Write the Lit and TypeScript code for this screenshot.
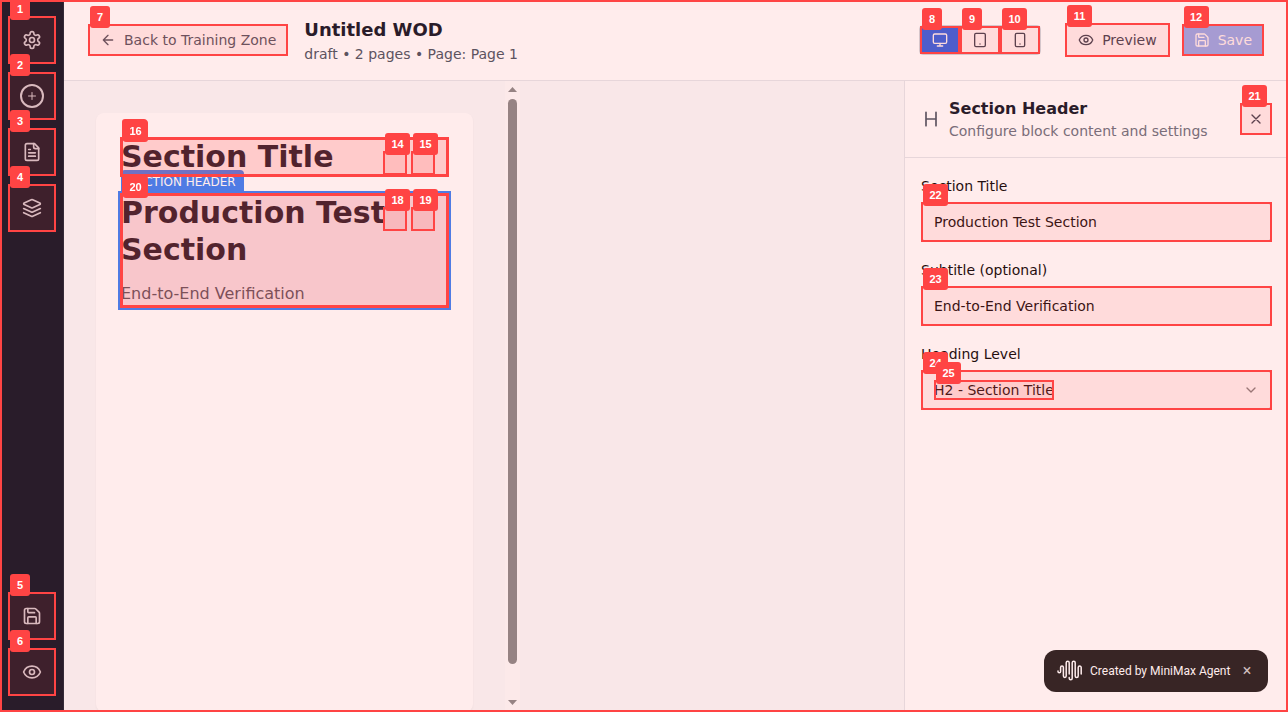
import { LitElement, html, css, svg, nothing } from "lit";
import { customElement, property, state } from "lit/decorators.js";
import { classMap } from "lit/directives/class-map.js";

const glyphs = {
  settings: svg`<path d="M12.22 2h-.44a2 2 0 0 0-2 2v.18a2 2 0 0 1-1 1.73l-.43.25a2 2 0 0 1-2 0l-.15-.08a2 2 0 0 0-2.73.73l-.22.38a2 2 0 0 0 .73 2.73l.15.1a2 2 0 0 1 1 1.72v.51a2 2 0 0 1-1 1.74l-.15.09a2 2 0 0 0-.73 2.73l.22.38a2 2 0 0 0 2.73.73l.15-.08a2 2 0 0 1 2 0l.43.25a2 2 0 0 1 1 1.73V20a2 2 0 0 0 2 2h.44a2 2 0 0 0 2-2v-.18a2 2 0 0 1 1-1.73l.43-.25a2 2 0 0 1 2 0l.15.08a2 2 0 0 0 2.73-.73l.22-.39a2 2 0 0 0-.73-2.73l-.15-.08a2 2 0 0 1-1-1.74v-.5a2 2 0 0 1 1-1.74l.15-.09a2 2 0 0 0 .73-2.73l-.22-.38a2 2 0 0 0-2.73-.73l-.15.08a2 2 0 0 1-2 0l-.43-.25a2 2 0 0 1-1-1.73V4a2 2 0 0 0-2-2z"/><circle cx="12" cy="12" r="3"/>`,
  plus: svg`<path d="M5 12h14M12 5v14"/>`,
  file: svg`<path d="M15 2H6a2 2 0 0 0-2 2v16a2 2 0 0 0 2 2h12a2 2 0 0 0 2-2V7Z"/><path d="M14 2v4a2 2 0 0 0 2 2h4M10 9H8M16 13H8M16 17H8"/>`,
  layers: svg`<path d="m12.83 2.18a2 2 0 0 0-1.66 0L2.6 6.08a1 1 0 0 0 0 1.83l8.58 3.91a2 2 0 0 0 1.66 0l8.58-3.9a1 1 0 0 0 0-1.83Z"/><path d="m22 17.65-9.17 4.16a2 2 0 0 1-1.66 0L2 17.65"/><path d="m22 12.65-9.17 4.16a2 2 0 0 1-1.66 0L2 12.65"/>`,
  save: svg`<path d="M15.2 3a2 2 0 0 1 1.4.6l3.8 3.8a2 2 0 0 1 .6 1.4V19a2 2 0 0 1-2 2H5a2 2 0 0 1-2-2V5a2 2 0 0 1 2-2z"/><path d="M17 21v-7a1 1 0 0 0-1-1H8a1 1 0 0 0-1 1v7M7 3v4a1 1 0 0 0 1 1h7"/>`,
  eye: svg`<path d="M2.06 12.35a1 1 0 0 1 0-.7 10.75 10.75 0 0 1 19.88 0 1 1 0 0 1 0 .7 10.75 10.75 0 0 1-19.88 0"/><circle cx="12" cy="12" r="3"/>`,
  back: svg`<path d="m12 19-7-7 7-7M19 12H5"/>`,
  monitor: svg`<rect x="2" y="3" width="20" height="14" rx="2"/><path d="M8 21h8M12 17v4"/>`,
  tablet: svg`<rect x="4" y="2" width="16" height="20" rx="2"/><path d="M12 18h.01"/>`,
  phone: svg`<rect x="5" y="2" width="14" height="20" rx="2"/><path d="M12 18h.01"/>`,
  close: svg`<path d="M18 6 6 18M6 6l12 12"/>`,
  heading: svg`<path d="M6 12h12M6 20V4M18 20V4"/>`,
  chevron: svg`<path d="m6 9 6 6 6-6"/>`,
};
type Glyph = keyof typeof glyphs;

const icon = (name: Glyph, size = 16) => html`<svg
  class="icon" width=${size} height=${size} viewBox="0 0 24 24" fill="none"
  stroke="currentColor" stroke-width="2" stroke-linecap="round" stroke-linejoin="round"
  aria-hidden="true">${glyphs[name]}</svg>`;

const mark = (n?: number, extra = "") => html`<span class="mark ${extra}" aria-hidden="true">${
  n ? html`<span class="tag ${n > 9 ? "wide" : ""}">${n}</span>` : nothing
}</span>`;

const shared = css`
  * { box-sizing: border-box; }
  button, input, select { font: inherit; color: inherit; margin: 0; }
  button { border: 0; background: none; padding: 0; cursor: pointer; }
  h1, h2, h3, p { margin: 0; }
  .icon { display: block; flex: none; }
  .slot { position: relative; display: flex; }
  .mark {
    position: absolute; inset: 0; z-index: 10; pointer-events: none;
    border: 2px solid #ff4444; background: rgba(255, 68, 68, 0.1);
  }
  .mark.inner { inset: 1px; }
  .tag {
    position: absolute; left: 0; top: -20px; width: 20px; height: 22px;
    border-radius: 3px; background: #ff4444; color: #fff; text-align: center;
    font: bold 11px/22px "Liberation Sans", Arial, sans-serif;
  }
  .tag.wide { width: 25px; }
  .inner > .tag { box-shadow: -1px -1px 0 #ff4444; }
`;

@customElement("side-rail")
class SideRail extends LitElement {
  static styles = [shared, css`
    :host {
      display: flex; flex-direction: column; gap: 8px; flex: none; width: 64px;
      padding: 16px 8px; background: #111827; border-right: 1px solid #1f2937; color: #d1d5db;
    }
    .slot { width: 48px; height: 48px; }
    .slot.push { margin-top: auto; }
    button { width: 100%; display: grid; place-items: center; }
    .ring {
      display: grid; place-items: center; width: 24px; height: 24px;
      border: 2px solid currentColor; border-radius: 50%;
    }
  `];
  items: { label: string; glyph: Glyph; push?: boolean }[] = [
    { label: "Settings", glyph: "settings" },
    { label: "Add block", glyph: "plus" },
    { label: "Pages", glyph: "file" },
    { label: "Layers", glyph: "layers" },
    { label: "Save", glyph: "save", push: true },
    { label: "Preview", glyph: "eye" },
  ];
  render() {
    return this.items.map((it, i) => html`
      <div class="slot ${it.push ? "push" : ""}">
        <button aria-label=${it.label}>${it.glyph === "plus"
          ? html`<span class="ring">${icon("plus", 12)}</span>`
          : icon(it.glyph, 20)}</button>
        ${mark(i + 1)}
      </div>`);
  }
}

@customElement("top-bar")
class TopBar extends LitElement {
  @state() device = "Desktop";
  static styles = [shared, css`
    :host {
      display: flex; align-items: center; gap: 16px; padding: 16px 24px;
      background: #fff; border-bottom: 1px solid #e5e7eb;
    }
    .btn { display: flex; align-items: center; gap: 8px; height: 32px; padding: 0 12px; color: #4b5563; }
    h1 { font-size: 18px; line-height: 28px; color: #111827; }
    p { line-height: 20px; color: #4b5563; }
    .actions { display: flex; align-items: center; gap: 12px; margin-left: auto; }
    .devices { display: flex; margin-right: 12px; border: 1px solid #d1d5db; border-radius: 4px; }
    .device { display: grid; place-items: center; width: 40px; height: 28px; color: #374151; }
    .device.on { background: #2563eb; color: #fff; border-radius: 3px 0 0 3px; }
    .outline { height: 34px; border: 1px solid #d1d5db; border-radius: 4px; color: #374151; }
    .primary { background: #2563eb; color: #fff; border-radius: 4px; opacity: 0.5; }
  `];
  render() {
    const devices: [string, Glyph][] = [["Desktop", "monitor"], ["Tablet", "tablet"], ["Mobile", "phone"]];
    return html`
      <div class="slot"><button class="btn">${icon("back")}Back to Training Zone</button>${mark(7)}</div>
      <div>
        <h1>Untitled WOD</h1>
        <p>draft • 2 pages • Page: Page 1</p>
      </div>
      <div class="actions">
        <div class="devices">
          ${devices.map(([name, g], i) => html`<div class="slot">
            <button class=${classMap({ device: true, on: this.device === name })} aria-label=${name}
              @click=${() => (this.device = name)}>${icon(g)}</button>${mark(8 + i)}
          </div>`)}
        </div>
        <div class="slot"><button class="btn outline">${icon("eye")}Preview</button>${mark(11)}</div>
        <div class="slot"><button class="btn primary" disabled>${icon("save")}Save</button>${mark(12)}</div>
      </div>`;
  }
}

@customElement("page-canvas")
class PageCanvas extends LitElement {
  static styles = [shared, css`
    :host { display: flex; flex: 1; min-width: 0; min-height: 0; background: #f9fafb; }
    .view { display: flex; width: 456px; max-width: 100%; }
    .sheet-wrap { flex: 1; min-width: 0; padding: 32px 32px 0; display: flex; }
    .sheet {
      flex: 1; min-width: 0; padding: 24px; display: flex; flex-direction: column; gap: 16px;
      background: #fff; border-radius: 8px; box-shadow: 0 1px 2px rgba(0, 0, 0, 0.05);
    }
    .block { position: relative; padding: 1px; color: #111827; }
    .block h2 { font-size: 30px; line-height: 37px; min-height: 38px; }
    .block p { margin-top: 12px; font-size: 16px; line-height: 27px; color: #4b5563; }
    .block.selected { background: #f6f9ff; box-shadow: 0 0 0 2px #3b82f6; }
    .chip {
      position: absolute; left: 1px; bottom: 100%; padding: 4px 8px 2px; border-radius: 4px 4px 0 0;
      background: #3b82f6; color: #fff; font-size: 12px; line-height: 17px; white-space: nowrap;
    }
    .tools { position: absolute; top: 14px; right: 14px; z-index: 11; display: flex; gap: 4px; }
    .tools .slot { width: 24px; height: 24px; }
    .tools button { width: 100%; opacity: 0; }
    .scroll {
      flex: none; width: 15px; padding: 6px 3px 7px; display: flex; flex-direction: column;
      align-items: center; gap: 7px; background: #fcfcfc; color: #8b8b8b;
    }
    .scroll svg { display: block; flex: none; }
    .thumb { width: 9px; flex: 1; border-radius: 5px; background: currentColor; margin-bottom: 29px; }
  `];
  tools(n: number) {
    return html`<div class="tools">
      <div class="slot"><button aria-label="Duplicate block"></button>${mark(n)}</div>
      <div class="slot"><button aria-label="Delete block"></button>${mark(n + 1)}</div>
    </div>`;
  }
  render() {
    return html`
      <div class="view">
        <div class="sheet-wrap">
          <div class="sheet">
            <section class="block">
              <h2>Section Title</h2>
              ${mark()}${mark(16, "inner")}${this.tools(14)}
            </section>
            <section class="block selected">
              <span class="chip">SECTION HEADER</span>
              <h2>Production Test Section</h2>
              <p>End-to-End Verification</p>
              ${mark()}${mark(20, "inner")}${this.tools(18)}
            </section>
          </div>
        </div>
        <div class="scroll" aria-hidden="true">
          <svg width="9" height="5" viewBox="0 0 9 5" fill="currentColor"><path d="M4.5 0 9 5H0z"/></svg>
          <div class="thumb"></div>
          <svg width="9" height="5" viewBox="0 0 9 5" fill="currentColor"><path d="M0 0h9L4.5 5z"/></svg>
        </div>
      </div>`;
  }
}

@customElement("block-settings")
class BlockSettings extends LitElement {
  @property() heading = "Production Test Section";
  @property() subtitle = "End-to-End Verification";
  static styles = [shared, css`
    :host { display: block; flex: none; width: 384px; background: #fff; border-left: 1px solid #e5e7eb; color: #0a0a0a; }
    header { display: flex; align-items: center; gap: 8px; padding: 16px; border-bottom: 1px solid #e5e7eb; color: #4b5563; }
    h3 { font-size: 16px; line-height: 24px; color: #111827; }
    header p { line-height: 20px; color: #6b7280; }
    .slot.close { margin-left: auto; width: 32px; height: 32px; }
    .close button { width: 100%; display: grid; place-items: center; color: #374151; }
    form { display: flex; flex-direction: column; gap: 16px; padding: 16px; }
    label { display: block; line-height: 24px; margin-bottom: 4px; }
    input, select {
      width: 100%; height: 40px; padding: 0 12px; border: 1px solid #d1d5db; border-radius: 6px;
      background: #fff; appearance: none; outline: 0;
    }
    .arrow { position: absolute; right: 13px; top: 12px; opacity: 0.5; pointer-events: none; }
    .value { position: absolute; left: 13px; top: 10px; width: 120px; height: 20px; z-index: 10; pointer-events: none; }
  `];
  render() {
    return html`
      <header>
        ${icon("heading", 20)}
        <div>
          <h3>Section Header</h3>
          <p>Configure block content and settings</p>
        </div>
        <div class="slot close"><button aria-label="Close">${icon("close")}</button>${mark(21)}</div>
      </header>
      <form>
        <div>
          <label for="title">Section Title</label>
          <div class="slot"><input id="title" type="text" .value=${this.heading} />${mark(22)}</div>
        </div>
        <div>
          <label for="subtitle">Subtitle (optional)</label>
          <div class="slot"><input id="subtitle" type="text" .value=${this.subtitle} />${mark(23)}</div>
        </div>
        <div>
          <label for="level">Heading Level</label>
          <div class="slot">
            <select id="level">
              <option>H1 - Page Title</option>
              <option selected>H2 - Section Title</option>
              <option>H3 - Subsection</option>
            </select>
            <span class="arrow">${icon("chevron")}</span>
            ${mark(24)}
            <span class="value">${mark(25)}</span>
          </div>
        </div>
      </form>`;
  }
}

@customElement("agent-toast")
class AgentToast extends LitElement {
  static styles = [shared, css`
    :host {
      position: fixed; right: 20px; bottom: 20px; z-index: 3; display: flex; align-items: center;
      height: 42px; width: 224px; padding: 0 13px; border-radius: 12px; background: #222; color: #fff;
      font: 400 12px/20px Roboto, sans-serif; white-space: nowrap;
    }
    .logo { flex: none; margin-right: 7px; }
    button { margin-left: auto; width: 16px; height: 20px; font: 400 16px/20px Roboto, sans-serif; color: #ccc; }
  `];
  render() {
    return html`
      <svg class="logo" width="26" height="22" viewBox="0 0 26 22" fill="none" stroke="currentColor"
        stroke-width="1.5" stroke-linecap="round" aria-hidden="true">
        <path d="M1 11v.5a1.3 1.3 0 0 0 2.6 0V7.5a1.4 1.4 0 0 1 2.8 0V16a1.4 1.4 0 0 0 2.8 0V2.8a1.5 1.5 0 0 1 3 0V14"/>
        <path d="M12.2 17.5v.8a1.5 1.5 0 0 0 3 0V2.8a1.5 1.5 0 0 1 3 0V16a1.5 1.5 0 0 0 3 0V7.5a1.5 1.5 0 0 1 3 0V14"/>
      </svg>
      <span>Created by MiniMax Agent</span>
      <button aria-label="Dismiss">×</button>`;
  }
}

@customElement("app-root")
class AppRoot extends LitElement {
  static styles = [shared, css`
    :host {
      position: relative; display: flex; height: 100vh; overflow: hidden;
      font: 14px/20px "DejaVu Sans", Verdana, sans-serif;
    }
    .main { flex: 1; min-width: 0; display: flex; flex-direction: column; }
    .work { flex: 1; min-height: 0; display: flex; }
    .frame {
      position: absolute; inset: 0; z-index: 5; pointer-events: none;
      border: 2px solid #ff4444; background: rgba(255, 68, 68, 0.1);
    }
  `];
  render() {
    return html`
      <side-rail></side-rail>
      <div class="main">
        <top-bar></top-bar>
        <div class="work">
          <page-canvas></page-canvas>
          <block-settings></block-settings>
        </div>
      </div>
      <agent-toast></agent-toast>
      <div class="frame"></div>`;
  }
}
